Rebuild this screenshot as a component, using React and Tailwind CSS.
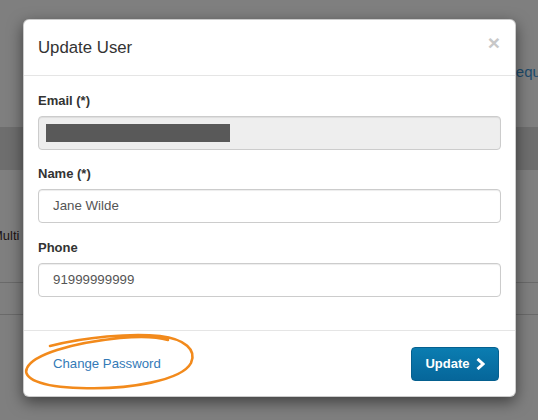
import React from "react";

const font = { fontFamily: '"Liberation Sans", Arial, sans-serif' };

function Field({ label, children, mb = "mb-[15px]" }) {
  return (
    <div className={mb}>
      <label className="block text-[13px] leading-[20px] font-bold text-[#333] mb-[5px]">
        {label}
      </label>
      {children}
    </div>
  );
}

function Input({ value }) {
  return (
    <div className="h-[34px] rounded-[4px] border border-[#ccc] bg-white pl-[14px] pr-3 flex items-center text-[13.3px] text-[#555] shadow-[inset_0_1px_1px_rgba(0,0,0,0.075)]">
      {value}
    </div>
  );
}

export default function App() {
  return (
    <div className="relative w-[538px] h-[420px] overflow-hidden bg-[#7f7f7f]" style={font}>
      {/* page behind the backdrop */}
      <div className="h-[127px] relative">
        <div className="absolute left-[505px] top-[61px] text-[15px] text-[#1c4a6b]">Requests</div>
      </div>
      <div className="h-[43px] bg-[#6e6e6e]" />
      <div className="h-[113px] border-b border-[#6a6a6a] flex items-start pt-[56px]">
        <span className="ml-[-8px] text-[13px] text-[#1c1414]">Multi</span>
      </div>
      <div className="h-[32px] border-b border-[#6a6a6a]" />

      {/* modal */}
      <div className="absolute left-[23px] top-[19px] w-[493px] bg-white rounded-[6px] shadow-[0_5px_15px_rgba(0,0,0,0.5)] border border-[rgba(0,0,0,0.2)]">
        <div className="h-[56px] px-[15px] flex items-center justify-between border-b border-[#e5e5e5]">
          <h4 className="text-[16.8px] leading-[26px] text-[#333] ml-[-1px]">Update User</h4>
          <span className="text-[21px] font-bold leading-none text-[#c8c8c8] mr-0 mt-[-10px]">×</span>
        </div>
        <div className="px-[14px] pt-[15px] pb-[18px]">
          <Field label="Email (*)" mb="mb-[14px]">
            <div className="h-[34px] rounded-[4px] border border-[#ccc] bg-[#eee] flex items-center pl-[7px] shadow-[inset_0_1px_1px_rgba(0,0,0,0.075)]">
              <div className="w-[184px] h-[18px] bg-[#595959]" />
            </div>
          </Field>
          <Field label="Name (*)" mb="mb-[15px]">
            <Input value="Jane Wilde" />
          </Field>
          <Field label="Phone">
            <Input value="91999999999" />
          </Field>
        </div>
        <div className="h-[66px] border-t border-[#e5e5e5] px-[15px] flex items-center justify-between">
          <a className="ml-[14px] text-[13.2px] text-[#337ab7]">Change Password</a>
          <button className="mr-[1px] w-[88px] h-[34px] rounded-[4px] border border-[#05608f] bg-gradient-to-b from-[#0b7db1] to-[#06669a] text-white text-[13px] font-bold flex items-center justify-center gap-[6px]">
            Update
            <svg width="9" height="12" viewBox="0 0 9 12">
              <path d="M1.5 1 L7 6 L1.5 11" fill="none" stroke="white" strokeWidth="3" strokeLinejoin="miter" />
            </svg>
          </button>
        </div>
      </div>

      {/* hand-drawn annotation */}
      <svg className="absolute inset-0 pointer-events-none" width="538" height="420" viewBox="0 0 538 420">
        <path
          d="M50 346 C85 337 130 333 160 336 C185 339 197 350 191 363 C182 380 130 390 80 388 C40 387 22 378 27 368 C33 355 70 343 120 338 C140 336 158 337 168 340"
          fill="none"
          stroke="#f28a1c"
          strokeWidth="2.6"
          strokeLinecap="round"
        />
      </svg>
    </div>
  );
}
